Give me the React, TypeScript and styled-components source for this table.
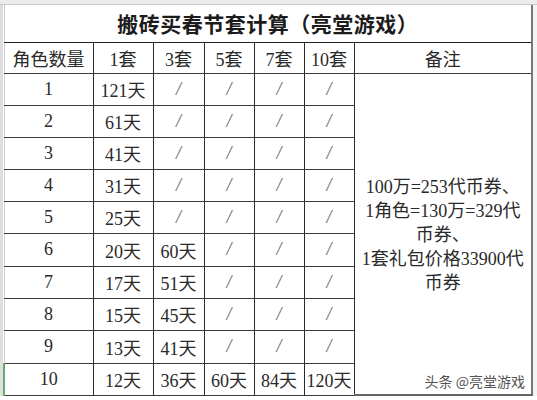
import React from 'react'
import styled, { createGlobalStyle } from 'styled-components'

const GlobalStyle = createGlobalStyle`
  html, body {
    margin: 0;
    padding: 0;
    background: #fff;
  }
  body {
    font-family: "Liberation Serif", "Noto Sans CJK SC", serif;
    color: #2a2a2a;
  }
`

type Row = { roles: number; cells: string[] }

const rows: Row[] = [
  { roles: 1, cells: ['121天', '/', '/', '/', '/'] },
  { roles: 2, cells: ['61天', '/', '/', '/', '/'] },
  { roles: 3, cells: ['41天', '/', '/', '/', '/'] },
  { roles: 4, cells: ['31天', '/', '/', '/', '/'] },
  { roles: 5, cells: ['25天', '/', '/', '/', '/'] },
  { roles: 6, cells: ['20天', '60天', '/', '/', '/'] },
  { roles: 7, cells: ['17天', '51天', '/', '/', '/'] },
  { roles: 8, cells: ['15天', '45天', '/', '/', '/'] },
  { roles: 9, cells: ['13天', '41天', '/', '/', '/'] },
  { roles: 10, cells: ['12天', '36天', '60天', '84天', '120天'] },
]

const headers = ['1套', '3套', '5套', '7套', '10套']
const widths = [89, 60, 51, 50, 50, 50, 178]

const noteLines = [
  '100万=253代币券、',
  '1角色=130万=329代',
  '币券、',
  '1套礼包价格33900代',
  '币券',
]

const App = () => {
  return (
    <>
      <GlobalStyle />
      <Sheet>
        <TopStrip />
        <Middle>
          <Gutter />
          <TableBox>
            <Grid>
              <colgroup>
                {widths.map((w, i) => (
                  <col key={i} style={{ width: w }} />
                ))}
              </colgroup>
              <tbody>
                <TitleRow>
                  <TitleCell colSpan={7}>搬砖买春节套计算（亮堂游戏）</TitleCell>
                </TitleRow>
                <HeadRow>
                  <Cell first>角色数量</Cell>
                  {headers.map((h) => (
                    <Cell key={h}>{h}</Cell>
                  ))}
                  <Cell last>备注</Cell>
                </HeadRow>
                {rows.map((r, i) => (
                  <BodyRow key={r.roles} tall={r.roles === 6 || r.roles === 9}>
                    <Cell first selected={r.roles === 10}>{r.roles}</Cell>
                    {r.cells.map((c, j) => (
                      c === '/' ? <Cell key={j}><Slash>/</Slash></Cell> : <Cell key={j}>{c}</Cell>
                    ))}
                    {i === 0 && (
                      <NoteCell rowSpan={10} last>
                        {noteLines.map((l, k) => (
                          <NoteLine key={k}>{l}</NoteLine>
                        ))}
                      </NoteCell>
                    )}
                  </BodyRow>
                ))}
              </tbody>
            </Grid>
            <Watermark>头条 @亮堂游戏</Watermark>
          </TableBox>
          <RightGutter />
        </Middle>
        <BottomStrip />
      </Sheet>
    </>
  )
}

export default App

const Sheet = styled.div`
  width: 537px;
  height: 400px;
  overflow: hidden;
  display: flex;
  flex-direction: column;
  background: #fff;
`
const TopStrip = styled.div`
  height: 4px;
  background: #ececec;
  border-bottom: 1px solid #c9c9c9;
  flex-shrink: 0;
`
const Middle = styled.div`
  display: flex;
`
const Gutter = styled.div`
  width: 3px;
  background: #dedede;
  flex-shrink: 0;
`
const RightGutter = styled.div`
  flex: 1;
  background: #f4f4f4;
`
const BottomStrip = styled.div`
  flex: 1;
  background: #fff;
`
const TableBox = styled.div`
  position: relative;
  width: 528px;
  flex-shrink: 0;
`
const Grid = styled.table`
  border-collapse: collapse;
  table-layout: fixed;
  width: 528px;
  font-size: 18px;
`
const TitleRow = styled.tr`
  height: 37px;
`
const TitleCell = styled.td`
  text-align: center;
  font-family: "Noto Sans CJK SC", sans-serif;
  font-weight: bold;
  font-size: 21px;
  letter-spacing: 0.5px;
  padding: 0;
  color: #1c1c1c;
  border-left: 1px solid #cfcfcf;
  border-right: 2px solid #777;
  border-bottom: 1px solid #222;
`
const HeadRow = styled.tr`
  height: 31px;
`
const BodyRow = styled.tr<{ tall?: boolean }>`
  height: ${(p) => (p.tall ? '33px' : '32px')};
`
const Cell = styled.td<{ first?: boolean; last?: boolean; selected?: boolean }>`
  text-align: center;
  vertical-align: middle;
  padding: 0;
  white-space: nowrap;
  overflow: hidden;
  border: 1px solid #2a2a2a;
  border-left: ${(p) => (p.selected ? '2px solid #5fae6a' : p.first ? '1px solid #cfcfcf' : '1px solid #2a2a2a')};
  border-right: ${(p) => (p.last ? '2px solid #777' : '1px solid #2a2a2a')};
  border-bottom-color: #3a3a3a;
`
const Slash = styled.span`
  color: #666;
  font-size: 18px;
  font-style: italic;
`
const NoteCell = styled(Cell)`
  white-space: normal;
  line-height: 24px;
  border-bottom: 2px solid #666;
  padding-top: 2px;
`
const NoteLine = styled.div`
  text-align: center;
`
const Watermark = styled.div`
  position: absolute;
  right: 6px;
  bottom: 5px;
  font-family: "Noto Sans CJK SC", sans-serif;
  font-size: 14px;
  color: #555;
  text-shadow: 0 0 2px #fff, 0 0 2px #fff;
`
